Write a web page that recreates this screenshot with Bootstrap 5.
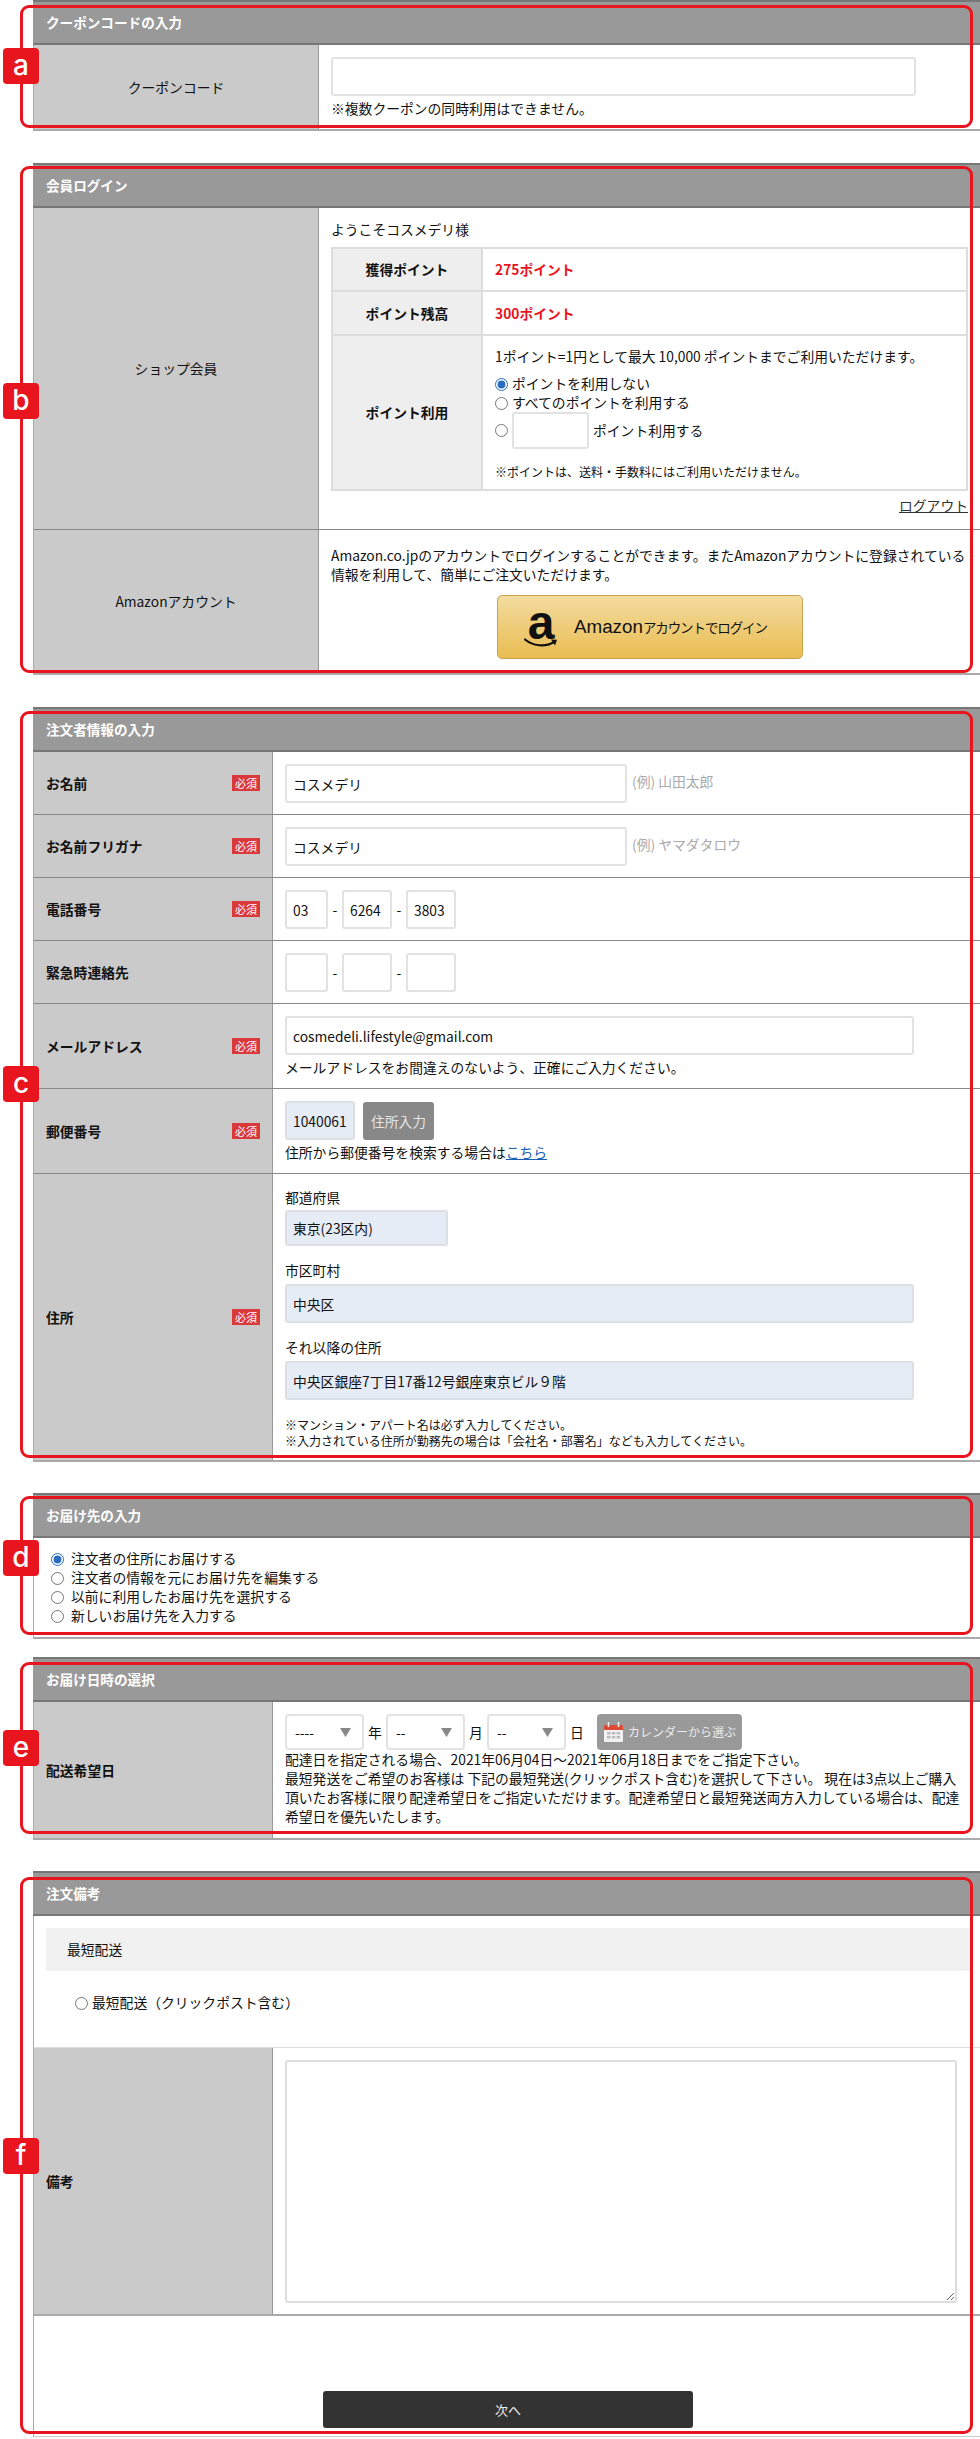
<!DOCTYPE html>
<html lang="ja">
<head>
<meta charset="utf-8">
<title>注文手続き</title>
<link href="https://cdn.jsdelivr.net/npm/bootstrap@5.3.0/dist/css/bootstrap.min.css" rel="stylesheet">
<style>
html,body{height:2439px;overflow:hidden}
body{margin:0;padding:0 0 0 33px;background:#fff;color:#111;font-family:"Noto Sans CJK JP",sans-serif;font-size:13.8px;line-height:19px}
.sect{position:relative;border-left:1px solid #aaa}
.gap32{margin-bottom:32px}.gap31{margin-bottom:31px}.gap18{margin-bottom:18px}
.sect-head{height:45px;background:#999;border-top:2px solid #777;border-bottom:2px solid #777;color:#fff;font-weight:700;font-size:13.6px;line-height:40px;padding-left:13px;margin-left:-1px}
.frow{display:flex;border-bottom:1px solid #888}
.frow-last{border-bottom:2px solid #aaa}
.lbl{flex:0 0 239px;background:#cacaca;border-right:1px solid #999;padding:0 12px;display:flex;align-items:center;justify-content:space-between;font-weight:700;color:#111}
.lbl-wide{flex-basis:285px;justify-content:center;font-weight:400}
.val{flex:1 1 0;min-width:0;padding:12px 12px 11px}
.val-wide{padding:16px 8px 14px 12px}
.req{flex:none;width:28px;height:16px;background:#d9393a;color:#fff;font-size:11px;font-weight:400;line-height:16px;text-align:center}
.fld{display:inline-block;height:39px;padding:0 6px;border:2px solid #e2e2e2;border-radius:3px;font-size:13.8px;line-height:35px;color:#111;background-color:#fff;box-shadow:none;vertical-align:middle}
.fld-fill{background-color:#e6ecf6;border-color:#dcdfe4}
.w-coupon{width:585px}.w-name{width:342px}.w-t1{width:43px}.w-t2{width:50px}.w-mail{width:629px}.w-zip{width:70px;padding-right:0}.w-pref{width:163px;height:36px;line-height:32px}.w-pt{width:77px;height:37px;flex:none}
.h-hint{color:#aaa;margin-left:5px}
.dash{display:inline-block;width:14px;text-align:center;vertical-align:middle}
.mt3px{margin-top:3px}
.zip-btn{display:inline-block;width:71px;height:38px;margin-left:8px;background:#888;border:0;border-radius:3px;color:#e4e4e4;font-size:13.8px;line-height:38px;padding:0;vertical-align:middle}
.lnk{color:#1a5fb4;text-decoration:underline}
.cap{margin-top:15px;margin-bottom:4px}
.addr-first{margin-top:2px}
.addr-note{margin-top:17px}
.note12{font-size:12px;line-height:16px}
.pts{width:100%;border-collapse:collapse;margin-top:8px;border:2px solid #ddd}
.pts th{width:150px;background:#eee;text-align:center;font-weight:700;border:2px solid #ddd;color:#111}
.pts td{border:2px solid #ddd;padding:0 12px;color:#111}
.pts-r1{height:43px}.pts-r2{height:44px}
.pts td.pts-red{color:#e8141e;font-weight:700}
.pts td.pts-use{vertical-align:top;padding:11px 12px 9px}
input[type=radio]{width:13px;height:13px;margin:0 4px 0 0;vertical-align:-2px;accent-color:#2a6cbf;flex:none}
.radio-row{height:19px;white-space:nowrap}
.pts-inp{height:37px}
.pts-note{margin-top:15px}
.logout{margin-top:5px;text-align:right;padding-bottom:3px}
.logout a{color:#333;text-decoration:underline}
.amz-text{line-height:18.5px}
.amz-wrap{display:flex;justify-content:center;margin-top:12px;padding-right:3px}
.amz-btn{display:flex;align-items:center;width:306px;height:64px;padding:0 0 0 26px;border:1px solid #c9a34a;border-radius:5px;background:linear-gradient(#f3dc9f,#e9bd52);color:#111}
.amz-mark{position:relative;display:block;width:34px;height:44px;margin-right:16px;flex:none}
.amz-a{display:block;text-align:center;font-family:"Liberation Sans",sans-serif;font-weight:700;font-size:48px;line-height:36px;color:#111;letter-spacing:0}
.amz-smile{position:absolute;left:0;bottom:0}
.amz-l1{font-family:"Liberation Sans",sans-serif;font-size:18.8px}
.amz-l2{font-size:13.5px;letter-spacing:-1.1px}
.dest{padding:11px 12px 12px 17px;border-bottom:2px solid #aaa}
.dest input[type=radio]{margin-right:7px}
.sel{display:inline-block;width:79px;height:36px;padding:0 8px;border:2px solid #e2e2e2;border-radius:4px;font-size:13.8px;color:#111;background-color:#fff;background-position:right 11px center;background-size:11px 9px;background-image:url("data:image/svg+xml,%3Csvg xmlns='http://www.w3.org/2000/svg' viewBox='0 0 11 9'%3E%3Cpath fill='%23888' d='M0 0h11L5.500 9z'/%3E%3C/svg%3E");box-shadow:none;vertical-align:middle}
.unit{display:inline-block;width:22px;text-align:center;vertical-align:middle}
.date-top{display:flex;align-items:center;height:36px}
.cal-btn{display:flex;align-items:center;width:145px;height:36px;margin-left:9px;padding:0 0 0 7px;background:#999;border:0;border-radius:4px;color:#ececec;font-size:12px}
.cal-btn svg{margin-right:5px;flex:none}
.val-date{padding:12px 6px 12px 12px}
.band{height:43px;margin:12px 9px 0 12px;background:#f1f1f1;line-height:43px;padding-left:21px}
.quick{height:77px;padding:22px 0 0 41px;border-bottom:1px solid #ddd}
.memo-area{display:block;width:672px;height:243px;padding:6px;border:2px solid #ddd;border-radius:3px;box-shadow:none}
.foot{height:121px;padding-top:75px;border-bottom:1px solid #ccc}
.next-btn{display:block;width:370px;height:37px;margin-left:289px;background:#333;border:0;border-radius:3px;color:#eee;font-size:13px;line-height:37px;padding:0}
.frame{position:absolute;left:-14px;right:7px;border:3px solid #e8141e;border-radius:9px;pointer-events:none}
.tag{position:absolute;left:-31px;width:36px;height:36px;background:#e8141e;border-radius:4px;color:#fff;font-family:Inter,sans-serif;font-weight:500;font-size:28px;line-height:34px;text-align:center}
.fa{top:5px;height:123px}.ta{top:48px}
.fb{top:3px;height:507px}.tb{top:220px}
.fc{top:4px;height:747px}.tc{top:359px}
.fd{top:3px;height:139px}.td{top:47px}
.fe{top:5px;height:172px}.te{top:73px}
.ff{top:6px;height:557px}.tf{top:267px}
</style>
</head>
<body>

<section class="sect gap32">
  <div class="sect-head">クーポンコードの入力</div>
  <div class="frow frow-last">
    <div class="lbl lbl-wide">クーポンコード</div>
    <div class="val">
      <input type="text" class="form-control fld w-coupon">
      <div class="mt3px">※複数クーポンの同時利用はできません。</div>
    </div>
  </div>
  <div class="frame fa"></div><div class="tag ta">a</div>
</section>

<section class="sect gap32">
  <div class="sect-head">会員ログイン</div>
  <div class="frow">
    <div class="lbl lbl-wide">ショップ会員</div>
    <div class="val">
      <div>ようこそコスメデリ様</div>
      <table class="pts">
        <tr class="pts-r1"><th>獲得ポイント</th><td class="pts-red">275ポイント</td></tr>
        <tr class="pts-r2"><th>ポイント残高</th><td class="pts-red">300ポイント</td></tr>
        <tr><th>ポイント利用</th>
          <td class="pts-use">
            <div>1ポイント=1円として最大 10,000 ポイントまでご利用いただけます。</div>
            <div class="radio-row mt-2"><input type="radio" name="pt" checked>ポイントを利用しない</div>
            <div class="radio-row"><input type="radio" name="pt">すべてのポイントを利用する</div>
            <div class="radio-row d-flex align-items-center pts-inp"><input type="radio" name="pt"><input type="text" class="form-control fld w-pt"><span class="ms-1">ポイント利用する</span></div>
            <div class="note12 pts-note">※ポイントは、送料・手数料にはご利用いただけません。</div>
          </td>
        </tr>
      </table>
      <div class="logout"><a href="#">ログアウト</a></div>
    </div>
  </div>
  <div class="frow frow-last">
    <div class="lbl lbl-wide">Amazonアカウント</div>
    <div class="val val-wide">
      <div class="amz-text">Amazon.co.jpのアカウントでログインすることができます。またAmazonアカウントに登録されている情報を利用して、簡単にご注文いただけます。</div>
      <div class="amz-wrap">
        <a class="amz-btn text-decoration-none" href="#">
          <span class="amz-mark"><span class="amz-a">a</span>
            <svg class="amz-smile" width="34" height="11" viewBox="0 0 34 11"><path d="M1 1.500C9 8 21 9.500 30 4" fill="none" stroke="#111" stroke-width="2.200" stroke-linecap="round"/><path d="M27 1.500L33 1.800 31 7.500z" fill="#111"/></svg>
          </span>
          <span><span class="amz-l1">Amazon</span><span class="amz-l2">アカウントでログイン</span></span>
        </a>
      </div>
    </div>
  </div>
  <div class="frame fb"></div><div class="tag tb">b</div>
</section>

<section class="sect gap31">
  <div class="sect-head">注文者情報の入力</div>
  <div class="frow"><div class="lbl">お名前<span class="req">必須</span></div>
    <div class="val"><input type="text" class="form-control fld w-name" value="コスメデリ"><span class="h-hint">(例) 山田太郎</span></div></div>
  <div class="frow"><div class="lbl">お名前フリガナ<span class="req">必須</span></div>
    <div class="val"><input type="text" class="form-control fld w-name" value="コスメデリ"><span class="h-hint">(例) ヤマダタロウ</span></div></div>
  <div class="frow"><div class="lbl">電話番号<span class="req">必須</span></div>
    <div class="val"><input type="text" class="form-control fld w-t1" value="03"><span class="dash">-</span><input type="text" class="form-control fld w-t2" value="6264"><span class="dash">-</span><input type="text" class="form-control fld w-t2" value="3803"></div></div>
  <div class="frow"><div class="lbl">緊急時連絡先</div>
    <div class="val"><input type="text" class="form-control fld w-t1"><span class="dash">-</span><input type="text" class="form-control fld w-t2"><span class="dash">-</span><input type="text" class="form-control fld w-t2"></div></div>
  <div class="frow"><div class="lbl">メールアドレス<span class="req">必須</span></div>
    <div class="val"><input type="text" class="form-control fld w-mail" value="cosmedeli.lifestyle@gmail.com"><div class="mt3px">メールアドレスをお間違えのないよう、正確にご入力ください。</div></div></div>
  <div class="frow"><div class="lbl">郵便番号<span class="req">必須</span></div>
    <div class="val"><input type="text" class="form-control fld fld-fill w-zip" value="1040061"><button type="button" class="btn zip-btn">住所入力</button><div class="mt3px">住所から郵便番号を検索する場合は<a class="lnk" href="#">こちら</a></div></div></div>
  <div class="frow frow-last"><div class="lbl">住所<span class="req">必須</span></div>
    <div class="val">
      <div class="addr-first">都道府県</div>
      <input type="text" class="form-control fld fld-fill w-pref mt3px" value="東京(23区内)">
      <div class="cap">市区町村</div>
      <input type="text" class="form-control fld fld-fill w-mail" value="中央区">
      <div class="cap">それ以降の住所</div>
      <input type="text" class="form-control fld fld-fill w-mail" value="中央区銀座7丁目17番12号銀座東京ビル９階">
      <div class="note12 addr-note">※マンション・アパート名は必ず入力してください。<br>※入力されている住所が勤務先の場合は「会社名・部署名」なども入力してください。</div>
    </div></div>
  <div class="frame fc"></div><div class="tag tc">c</div>
</section>

<section class="sect gap18">
  <div class="sect-head">お届け先の入力</div>
  <div class="dest">
    <div class="radio-row"><input type="radio" name="dest" checked>注文者の住所にお届けする</div>
    <div class="radio-row"><input type="radio" name="dest">注文者の情報を元にお届け先を編集する</div>
    <div class="radio-row"><input type="radio" name="dest">以前に利用したお届け先を選択する</div>
    <div class="radio-row"><input type="radio" name="dest">新しいお届け先を入力する</div>
  </div>
  <div class="frame fd"></div><div class="tag td">d</div>
</section>

<section class="sect gap31">
  <div class="sect-head">お届け日時の選択</div>
  <div class="frow frow-last"><div class="lbl">配送希望日</div>
    <div class="val val-date">
      <div class="date-top">
        <select class="form-select sel"><option>----</option></select><span class="unit">年</span>
        <select class="form-select sel"><option>--</option></select><span class="unit">月</span>
        <select class="form-select sel"><option>--</option></select><span class="unit">日</span>
        <button type="button" class="btn cal-btn">
          <svg width="19" height="20" viewBox="0 0 19 20"><rect x="0" y="3" width="19" height="17" rx="1" fill="#f2f2f2"/><path d="M0 4a1 1 0 0 1 1-1h17a1 1 0 0 1 1 1v4H0z" fill="#dc4a38"/><path d="M4.500 0v5M14.500 0v5" stroke="#f2f2f2" stroke-width="1.500"/><path d="M3 10h3.500v2.500H3zM7.800 10h3.500v2.500H7.800zM12.600 10h3.500v2.500h-3.500zM3 14h3.500v2.500H3zM7.800 14h3.500v2.500H7.800zM12.600 14h3.500v2.500h-3.500z" fill="#bbb"/></svg>
          カレンダーから選ぶ
        </button>
      </div>
      <div>配達日を指定される場合、2021年06月04日～2021年06月18日までをご指定下さい。<br>最短発送をご希望のお客様は 下記の最短発送(クリックポスト含む)を選択して下さい。 現在は3点以上ご購入<br>頂いたお客様に限り配達希望日をご指定いただけます。配達希望日と最短発送両方入力している場合は、配達<br>希望日を優先いたします。</div>
    </div></div>
  <div class="frame fe"></div><div class="tag te">e</div>
</section>

<section class="sect memo-sect">
  <div class="sect-head">注文備考</div>
  <div class="band">最短配送</div>
  <div class="quick"><input type="radio" name="q">最短配送（クリックポスト含む）</div>
  <div class="frow frow-last memo-row"><div class="lbl">備考</div>
    <div class="val"><textarea class="form-control memo-area"></textarea></div></div>
  <div class="foot"><button type="button" class="btn next-btn">次へ</button></div>
  <div class="frame ff"></div><div class="tag tf">f</div>
</section>

<script src="https://cdn.jsdelivr.net/npm/bootstrap@5.3.0/dist/js/bootstrap.bundle.min.js"></script>
</body>
</html>
